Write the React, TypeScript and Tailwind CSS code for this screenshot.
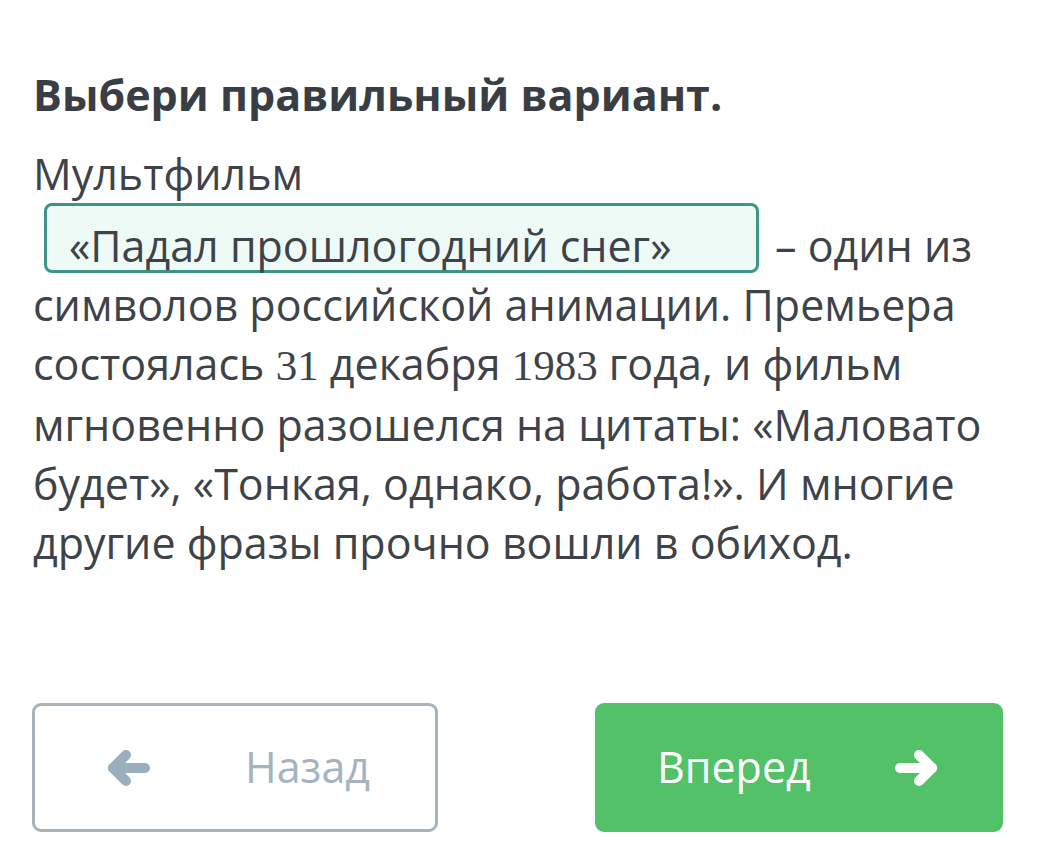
import React from "react";

const Arrow = ({ dir, color }: { dir: "left" | "right"; color: string }) => (
  <svg width="44" height="36" viewBox="0 0 44 36" fill="none" style={{ transform: dir === "left" ? "scaleX(-1)" : undefined }}>
    <path d="M5 18 H37" stroke={color} strokeWidth="10" strokeLinecap="round" />
    <path d="M24 5 L37 18 L24 31" stroke={color} strokeWidth="10" strokeLinecap="round" strokeLinejoin="round" />
  </svg>
);

const Num = ({ children }: { children: React.ReactNode }) => (
  <span className="text-[43px]" style={{ fontFamily: '"Liberation Serif", serif' }}>
    {children}
  </span>
);

export default function App() {
  return (
    <div
      className="w-[1057px] h-[845px] bg-white overflow-hidden flex flex-col pb-[13px]"
      style={{ fontFamily: '"Open Sans", sans-serif' }}
    >
      <div className="pl-[33px] pr-[30px] pt-[67px]">
        <h1 className="text-[43px] leading-[56px] font-bold text-[#393e44]">Выбери правильный вариант.</h1>
        <p className="mt-[21px] text-[43px] leading-[59px] text-[#3e4349]">
          Мультфильм{" "}
          <span className="inline-block box-border align-baseline w-[715px] h-[70px] ml-[11px] mr-[16px] pl-[22px] pt-[14px] rounded-[8px] border-[3px] border-[#3f9488] bg-[#eefaf6] leading-[52px]">
            «Падал прошлогодний снег»
          </span>
          – один из символов российской анимации. Премьера состоялась <Num>31</Num> декабря <Num>1983</Num> года, и
          фильм мгновенно разошелся на цитаты: «Маловато будет», «Тонкая, однако, работа!». И многие другие фразы
          прочно вошли в обиход.
        </p>
      </div>
      <div className="mt-auto flex pl-[32px] gap-[157px]">
        <button className="w-[406px] h-[129px] rounded-[9px] border-[3px] border-[#a8b3ba] bg-white flex items-center pl-[71px]">
          <Arrow dir="left" color="#9aafbd" />
          <span className="ml-[95px] text-[43px] text-[#a3b4c0]">Назад</span>
        </button>
        <button className="w-[408px] h-[129px] rounded-[9px] bg-[#52c168] flex items-center pl-[62px]">
          <span className="text-[43px] text-white">Вперед</span>
          <span className="ml-[84px]">
            <Arrow dir="right" color="#ffffff" />
          </span>
        </button>
      </div>
    </div>
  );
}
